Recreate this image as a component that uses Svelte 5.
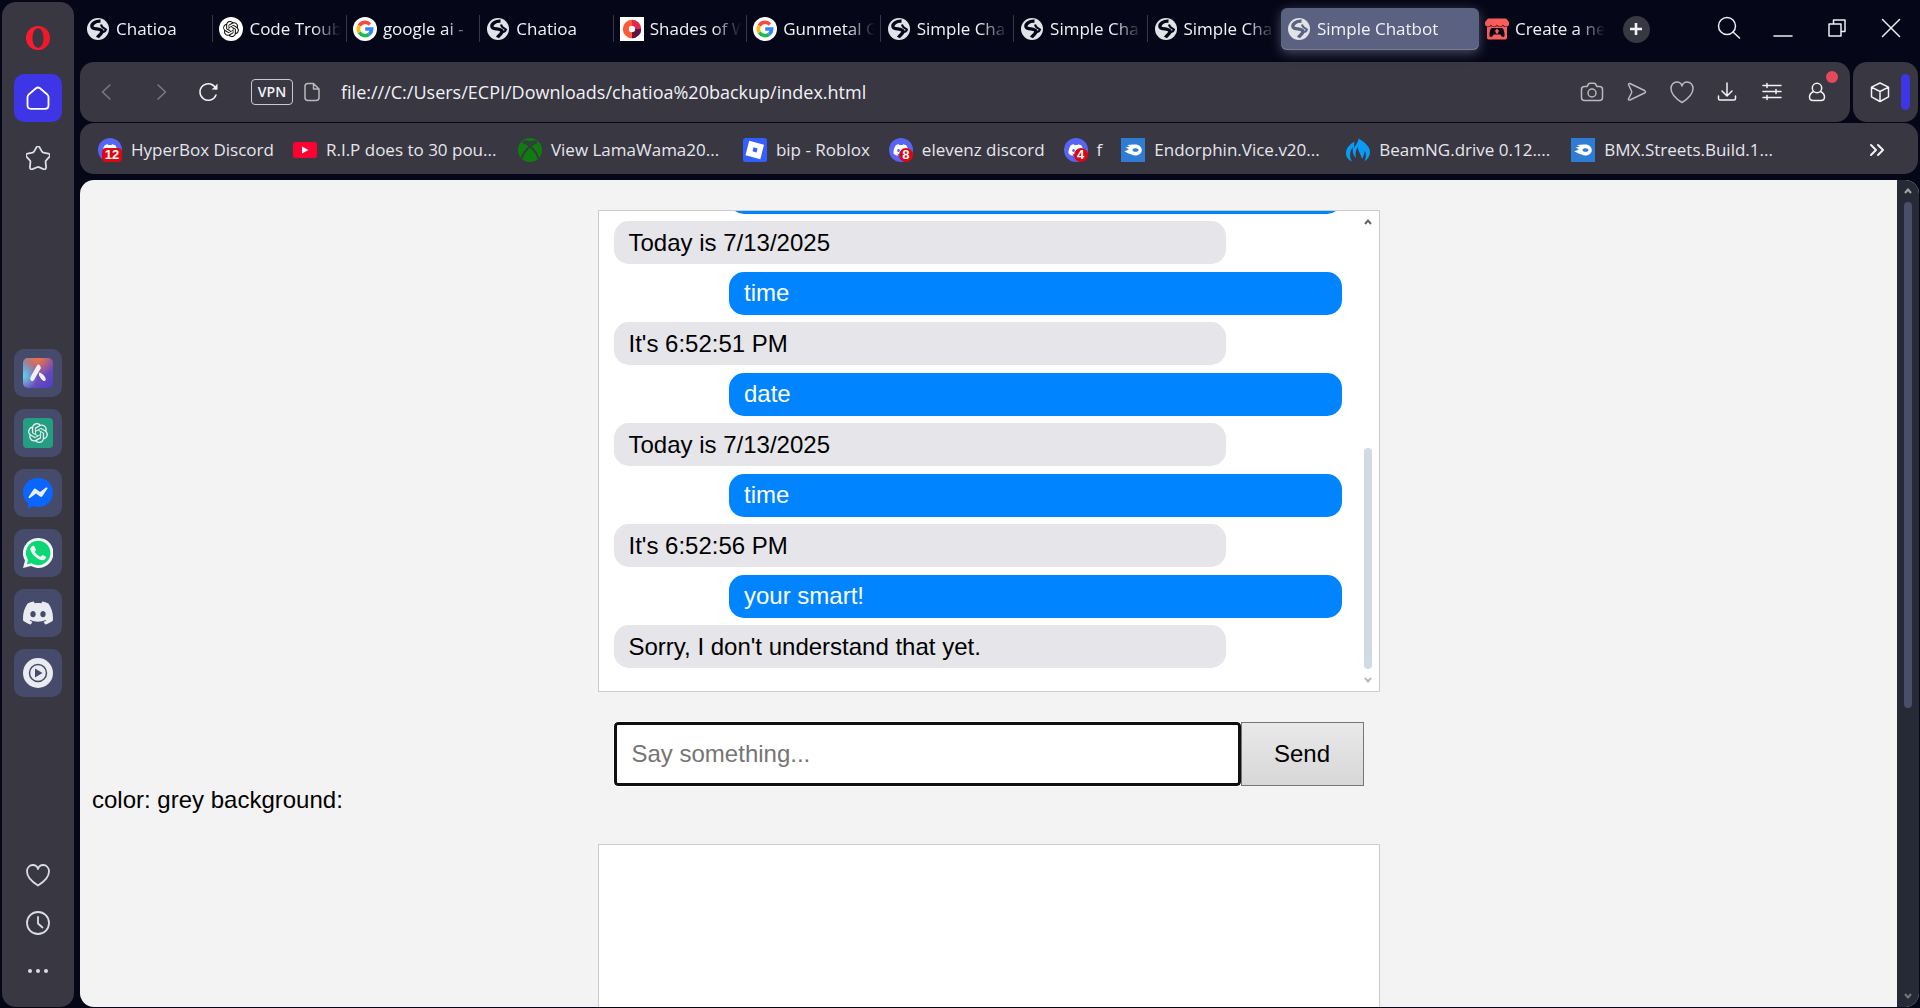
<script>
  const tabs = [
    { title: 'Chatioa', icon: 'globe' },
    { title: 'Code Troub', icon: 'openai' },
    { title: 'google ai -', icon: 'google' },
    { title: 'Chatioa', icon: 'globe' },
    { title: 'Shades of W', icon: 'shades' },
    { title: 'Gunmetal G', icon: 'google' },
    { title: 'Simple Cha', icon: 'globe' },
    { title: 'Simple Cha', icon: 'globe' },
    { title: 'Simple Cha', icon: 'globe' },
    { title: 'Simple Chatbot', icon: 'globe', active: true },
    { title: 'Create a ne', icon: 'itch', last: true }
  ];

  const bookmarks = [
    { title: 'HyperBox Discord', icon: 'discord', badge: '12' },
    { title: 'R.I.P does to 30 pou...', icon: 'youtube', long: true },
    { title: 'View LamaWama20...', icon: 'xbox', long: true },
    { title: 'bip - Roblox', icon: 'roblox' },
    { title: 'elevenz discord', icon: 'discord', badge: '8' },
    { title: 'f', icon: 'discord', badge: '4' },
    { title: 'Endorphin.Vice.v20...', icon: 'mediafire', long: true },
    { title: 'BeamNG.drive 0.12....', icon: 'beam', long: true },
    { title: 'BMX.Streets.Build.1...', icon: 'mediafire', long: true }
  ];

  const apps = [
    { name: 'Aria', icon: 'aria' },
    { name: 'ChatGPT', icon: 'chatgpt' },
    { name: 'Messenger', icon: 'messenger' },
    { name: 'WhatsApp', icon: 'whatsapp' },
    { name: 'Discord', icon: 'discordMark' },
    { name: 'Player', icon: 'player' }
  ];

  const tools = [
    { name: 'Snapshot', icon: 'camera', dim: true },
    { name: 'Send to My Flow', icon: 'send', dim: true },
    { name: 'Add to bookmarks', icon: 'heart', dim: true },
    { name: 'Downloads', icon: 'download' },
    { name: 'Easy setup', icon: 'sliders' },
    { name: 'Profile', icon: 'profile' }
  ];

  let messages = $state([
    { from: 'user', text: 'date' },
    { from: 'bot', text: 'Today is 7/13/2025' },
    { from: 'user', text: 'time' },
    { from: 'bot', text: "It's 6:52:51 PM" },
    { from: 'user', text: 'date' },
    { from: 'bot', text: 'Today is 7/13/2025' },
    { from: 'user', text: 'time' },
    { from: 'bot', text: "It's 6:52:56 PM" },
    { from: 'user', text: 'your smart!' },
    { from: 'bot', text: "Sorry, I don't understand that yet." }
  ]);
  let draft = $state('');
  let url = $state('file:///C:/Users/ECPI/Downloads/chatioa%20backup/index.html');

  function reply(text) {
    const said = text.toLowerCase();
    if (said.includes('time')) return "It's " + new Date().toLocaleTimeString();
    if (said.includes('date')) return 'Today is ' + new Date().toLocaleDateString();
    return "Sorry, I don't understand that yet.";
  }

  function send(event) {
    event.preventDefault();
    const text = draft.trim();
    if (!text) return;
    messages.push({ from: 'user', text }, { from: 'bot', text: reply(text) });
    draft = '';
  }

  const openaiPath =
    'M22.2819 9.8211a5.9847 5.9847 0 0 0-.5157-4.9108 6.0462 6.0462 0 0 0-6.5098-2.9A6.0651 6.0651 0 0 0 4.9807 4.1818a5.9847 5.9847 0 0 0-3.9977 2.9 6.0462 6.0462 0 0 0 .7427 7.0966 5.98 5.98 0 0 0 .511 4.9107 6.051 6.051 0 0 0 6.5146 2.9001A5.9847 5.9847 0 0 0 13.2599 24a6.0557 6.0557 0 0 0 5.7718-4.2058 5.9894 5.9894 0 0 0 3.9977-2.9001 6.0557 6.0557 0 0 0-.7475-7.0729zm-9.022 12.6081a4.4755 4.4755 0 0 1-2.8764-1.0408l.1419-.0804 4.7783-2.7582a.7948.7948 0 0 0 .3927-.6813v-6.7369l2.02 1.1686a.071.071 0 0 1 .038.052v5.5826a4.504 4.504 0 0 1-4.4945 4.4944zm-9.6607-4.1254a4.4708 4.4708 0 0 1-.5346-3.0137l.142.0852 4.783 2.7582a.7712.7712 0 0 0 .7806 0l5.8428-3.3685v2.3324a.0804.0804 0 0 1-.0332.0615L9.74 19.9502a4.4992 4.4992 0 0 1-6.1408-1.6464zM2.3408 7.8956a4.485 4.485 0 0 1 2.3655-1.9728V11.6a.7664.7664 0 0 0 .3879.6765l5.8144 3.3543-2.0201 1.1685a.0757.0757 0 0 1-.071 0l-4.8303-2.7865A4.504 4.504 0 0 1 2.3408 7.872zm16.5963 3.8558L13.1038 8.364 15.1192 7.2a.0757.0757 0 0 1 .071 0l4.8303 2.7913a4.4944 4.4944 0 0 1-.6765 8.1042v-5.6772a.79.79 0 0 0-.407-.667zm2.0107-3.0231l-.142-.0852-4.7735-2.7818a.7759.7759 0 0 0-.7854 0L9.409 9.2297V6.8974a.0662.0662 0 0 1 .0284-.0615l4.8303-2.7866a4.4992 4.4992 0 0 1 6.6802 4.66zM8.3065 12.863l-2.02-1.1638a.0804.0804 0 0 1-.038-.0567V6.0742a4.4992 4.4992 0 0 1 7.3757-3.4537l-.142.0805L8.704 5.459a.7948.7948 0 0 0-.3927.6813zm1.0976-2.3654l2.602-1.4998 2.6069 1.4998v2.9994l-2.5974 1.4997-2.6067-1.4997Z';
  const discordPath =
    'M20.317 4.3698a19.7913 19.7913 0 00-4.8851-1.5152.0741.0741 0 00-.0785.0371c-.211.3753-.4447.8648-.6083 1.2495-1.8447-.2762-3.68-.2762-5.4868 0-.1636-.3933-.4058-.8742-.6177-1.2495a.077.077 0 00-.0785-.037 19.7363 19.7363 0 00-4.8852 1.515.0699.0699 0 00-.0321.0277C.5334 9.0458-.319 13.5799.0992 18.0578a.0824.0824 0 00.0312.0561c2.0528 1.5076 4.0413 2.4228 5.9929 3.0294a.0777.0777 0 00.0842-.0276c.4616-.6304.8731-1.2952 1.226-1.9942a.076.076 0 00-.0416-.1057c-.6528-.2476-1.2743-.5495-1.8722-.8923a.077.077 0 01-.0076-.1277c.1258-.0943.2517-.1923.3718-.2914a.0743.0743 0 01.0776-.0105c3.9278 1.7933 8.18 1.7933 12.0614 0a.0739.0739 0 01.0785.0095c.1202.099.246.1981.3728.2924a.077.077 0 01-.0066.1276 12.2986 12.2986 0 01-1.873.8914.0766.0766 0 00-.0407.1067c.3604.698.7719 1.3628 1.225 1.9932a.076.076 0 00.0842.0286c1.961-.6067 3.9495-1.5219 6.0023-3.0294a.077.077 0 00.0313-.0552c.5004-5.177-.8382-9.6739-3.5485-13.6604a.061.061 0 00-.0312-.0286zM8.02 15.3312c-1.1825 0-2.1569-1.0857-2.1569-2.419 0-1.3332.9555-2.4189 2.157-2.4189 1.2108 0 2.1757 1.0952 2.1568 2.419 0 1.3332-.9555 2.4189-2.1569 2.4189zm7.9748 0c-1.1825 0-2.1569-1.0857-2.1569-2.419 0-1.3332.9554-2.4189 2.1569-2.4189 1.2108 0 2.1757 1.0952 2.1568 2.419 0 1.3332-.946 2.4189-2.1568 2.4189Z';
</script>

{#snippet favicon(name)}
  <svg class="favicon" viewBox="0 0 24 24" aria-hidden="true">
    {#if name === 'globe'}
      <circle cx="12" cy="12" r="11" fill="#e1e3e8" />
      <path class="cutLine" d="M14.500 4.200C9.500 3.800 4.800 7.200 6.200 10.200C7.600 12.800 14.800 11 15.800 14C16.600 16.800 13 17.500 11.500 20.500" />
      <path class="cutLine thin" d="M15 7.500C15.500 10.500 18.500 11.500 20 12.500C19.500 14 18 15 16.500 15" />
    {:else if name === 'openai'}
      <circle cx="12" cy="12" r="12" fill="#fff" />
      <g transform="translate(4 4) scale(.6667)"><path fill="#111" d={openaiPath} /></g>
    {:else if name === 'google'}
      <circle cx="12" cy="12" r="12" fill="#fff" />
      <g fill="none" stroke-width="3.600">
        <path stroke="#fb4a3c" d="M6.300 8.600A6.700 6.700 0 0 1 16.900 7.400" />
        <path stroke="#fbbc04" d="M6.300 15.400A6.700 6.700 0 0 1 6.300 8.600" />
        <path stroke="#25b84c" d="M16.300 17.100A6.700 6.700 0 0 1 6.300 15.400" />
        <path stroke="#3186ff" d="M12.200 12H18.700A6.700 6.700 0 0 1 16.300 17.100" />
      </g>
    {:else if name === 'shades'}
      <rect width="24" height="24" fill="#fff" />
      <circle cx="12" cy="12" r="6.200" fill="none" stroke="#ff5a36" stroke-width="6" />
      <path d="M12 5.800a6.200 6.200 0 0 1 6.200 6.200" fill="none" stroke="#e02a4e" stroke-width="6" />
      <path d="M18.200 12A6.200 6.200 0 0 1 12 18.200" fill="none" stroke="#5c1546" stroke-width="6" />
    {:else if name === 'itch'}
      <path fill="#fa5c5c" d="M3 1.500h18L24 5v2.200C24 8.600 22.700 9.500 21.300 9.500c-1.600 0-2.700-.8-3.300-1.800-.6 1-1.500 1.800-3 1.800-1.400 0-2.400-.8-3-1.800-.6 1-1.600 1.800-3 1.800-1.500 0-2.400-.8-3-1.800-.6 1-1.700 1.800-3.300 1.800C1.300 9.500 0 8.600 0 7.200V5z" />
      <path fill="#fa5c5c" d="M2 10c1.600.2 3-.1 4-1 1.800 1.400 4.200 1.400 6 0 1.800 1.400 4.200 1.400 6 0 1 .9 2.400 1.200 4 1v10.500c0 1.600-.6 2-2.500 2h-15c-1.900 0-2.500-.4-2.500-2z" />
      <path class="cut" d="M7.500 11h9c1.700 0 2.200 1.500 2.800 4.400.5 2.500.4 4.600-1.200 4.600-1.300 0-2-1.500-2.900-2.500H8.800c-.9 1-1.600 2.500-2.900 2.500-1.600 0-1.700-2.100-1.200-4.600C5.300 12.500 5.800 11 7.500 11z" />
      <path fill="#fa5c5c" d="M12 11.500l2.600 3h-1.400v2h-2.400v-2H9.400z" />
    {:else if name === 'discord'}
      <circle cx="12" cy="12" r="12" fill="#5865f2" />
      <g transform="translate(4.500 4.500) scale(.625)"><path fill="#fff" d={discordPath} /></g>
    {:else if name === 'youtube'}
      <rect y="4" width="24" height="16" rx="2.500" fill="#ff0033" />
      <path fill="#fff" d="M9 8.500l6.500 3.500L9 15.500z" />
    {:else if name === 'xbox'}
      <circle cx="12" cy="12" r="12" fill="#107c10" />
      <path class="panelCut" d="M4 3.600C7 3 10 5 12 6.600 14 5 17 3 20 3.600 17 1.800 14.500 2.600 12 4 9.500 2.600 7 1.800 4 3.600z" />
      <path class="panelLine" d="M5 3.800C12 7 18 13 20.500 20.500M19 3.800C12 7 6 13 3.500 20.500" />
    {:else if name === 'roblox'}
      <rect width="24" height="24" rx="2.500" fill="#335fff" />
      <path fill="#fff" fill-rule="evenodd" d="M6.200 2.800L21 6.800 17.300 21.200 2.500 17.300zM10.600 9.300l-1.100 4 4 1.100 1.100-4z" />
    {:else if name === 'mediafire'}
      <rect width="24" height="24" fill="#2e7cd3" />
      <path fill="#fff" d="M6 7.200C9 6.300 12 6.500 14.500 6.500 18 6.500 20.800 9 20.800 12S18 17.500 14.500 17.500C11.500 17.500 9.500 16 7 15.300L3.300 13.200C5 12.800 6.500 12.200 8 11.200L4.500 9.500C6.500 9.500 7.500 9 9 8.600Z" />
      <ellipse cx="14.500" cy="12" rx="3" ry="1.800" fill="#2e7cd3" />
    {:else if name === 'beam'}
      <path fill="#0a9cf5" d="M12.500.5c5 3 11.500 7.500 11.500 13.500 0 4-2 7-5.500 9.500 1.500-3.500 2-7 .3-11-.4 3.500-1.300 6.500-2.800 8.500-1-5-4-7.500-4.200-12C9.600 12 9.300 15 9.800 20 7 16.500 6.300 14 7 9c-3 3.500-4.300 9-1 14.500C1.500 21.500 0 18.500 0 15 0 9.500 4.500 6 8.500 3.500 8 5.500 8 8 8.500 10 9.500 6.500 12.500 4 12.500.5z" />
    {/if}
  </svg>
{/snippet}

{#snippet line(name)}
  <svg class="line" viewBox="0 0 24 24" aria-hidden="true">
    {#if name === 'home'}
      <path d="M12 1.500Q13 1.500 14 2.300L21 8.200Q22.500 9.500 22.500 11V19.500Q22.500 22.800 19.200 22.800H4.800Q1.500 22.800 1.500 19.500V11Q1.500 9.500 3 8.200L10 2.300Q11 1.500 12 1.500Z" />
    {:else if name === 'star'}
      <path d="M10.500 1.300Q12 -1 13.500 1.300L16 5.600Q16.500 6.400 17.400 6.600L22.400 7.700Q25 8.600 23.300 10.800L20 14.600Q19.500 15.300 19.600 16.200L20.100 21.300Q20 24 17.500 23.200L12.900 21.200Q12 20.800 11.100 21.200L6.500 23.200Q4 24 3.900 21.300L4.400 16.200Q4.500 15.300 4 14.600L.7 10.800Q-1 8.600 1.600 7.700L6.600 6.600Q7.500 6.400 8 5.600Z" />
    {:else if name === 'heart'}
      <path d="M12 22.500C8 20 1 14.500 1 8.500 1 4.500 3.800 2 6.800 2 9.500 2 11.300 3.400 12 6 12.700 3.400 14.500 2 17.200 2 20.200 2 23 4.500 23 8.500 23 14.500 16 20 12 22.500Z" />
    {:else if name === 'clock'}
      <circle cx="12" cy="12" r="11" /><path d="M12 6v6.500l4.500 4" />
    {:else if name === 'dots'}
      <g class="solid"><circle cx="4" cy="12" r="2" /><circle cx="12" cy="12" r="2" /><circle cx="20" cy="12" r="2" /></g>
    {:else if name === 'back'}
      <path d="M16 5L8.500 12L16 19" />
    {:else if name === 'forward'}
      <path d="M8 5L15.500 12L8 19" />
    {:else if name === 'reload'}
      <path d="M20 9A8.300 8.300 0 1 0 20 15" /><path class="solid" d="M21.500 3.500V9.500H15.500L18 7.500Z" />
    {:else if name === 'page'}
      <path d="M8 3.500H13.500L19 9V17.500Q19 20.500 16 20.500H8Q5 20.500 5 17.500V6.500Q5 3.500 8 3.500ZM13.500 3.500V9H19" />
    {:else if name === 'camera'}
      <path d="M4.500 6.500H7L8.500 4Q9 3.200 10 3.200H14Q15 3.200 15.500 4L17 6.500H19.500Q22.500 6.500 22.500 9.500V17.500Q22.500 20.500 19.500 20.500H4.500Q1.500 20.500 1.500 17.500V9.500Q1.500 6.500 4.500 6.500Z" /><circle cx="12" cy="13" r="4" />
    {:else if name === 'send'}
      <path d="M3.500 4.500Q3.500 3 5 3.500L19.500 10.500Q21.500 12 19.500 13L5 20Q3 20.500 3.500 18.800L6.500 13Q7 12 6.500 11Z" />
    {:else if name === 'download'}
      <path d="M12 3V15.500M7 11L12 16L17 11M3.500 16V18.500Q3.500 20 5 20H19Q20.500 20 20.500 18.500V16" />
    {:else if name === 'sliders'}
      <path d="M3 5.500H21M3 11.500H21M3 17.500H21M7 3.500V7.500M16 9.500V13.500M7 15.500V19.500" />
    {:else if name === 'profile'}
      <circle cx="12" cy="8" r="4.700" /><path d="M8.500 11.500Q4.500 13.500 4.500 17Q4.500 20.500 8 20.500H16Q19.500 20.500 19.500 17Q19.500 13.500 15.500 11.500" />
    {:else if name === 'cube'}
      <path d="M12 3L20.500 7.200V16.800L12 21.500L3.500 16.800V7.200ZM3.500 7.200L12 11.500L20.500 7.200M12 11.500V21.500" />
    {:else if name === 'search'}
      <circle cx="10" cy="10" r="8.500" /><path d="M16 16L22.500 22" />
    {:else if name === 'minimise'}
      <path d="M3 20H21" />
    {:else if name === 'restore'}
      <path d="M4 8H16V20H4ZM8.500 8V4H20V15.500H16" />
    {:else if name === 'close'}
      <path d="M3.500 3.500L20.500 20.500M20.500 3.500L3.500 20.500" />
    {:else if name === 'more'}
      <path d="M6 7L11 12L6 17M13 7L18 12L13 17" />
    {:else if name === 'plus'}
      <path d="M12 6V18M6 12H18" />
    {/if}
  </svg>
{/snippet}

{#snippet appIcon(name)}
  <svg class="app-icon" viewBox="0 0 30 30" aria-hidden="true">
    {#if name === 'aria'}
      <defs>
        <linearGradient id="aria-base" x1="0" y1="0" x2="1" y2="1">
          <stop offset="0" stop-color="#8a8fb0" /><stop offset=".5" stop-color="#7550b8" /><stop offset="1" stop-color="#4a3fc4" />
        </linearGradient>
        <radialGradient id="aria-warm" cx=".5" cy="0" r=".6"><stop offset="0" stop-color="#f4703f" /><stop offset="1" stop-color="#f4703f" stop-opacity="0" /></radialGradient>
        <radialGradient id="aria-cool" cx="0" cy=".6" r=".5"><stop offset="0" stop-color="#63d4ea" /><stop offset="1" stop-color="#63d4ea" stop-opacity="0" /></radialGradient>
      </defs>
      <rect width="30" height="30" rx="5" fill="url(#aria-base)" />
      <rect width="30" height="30" rx="5" fill="url(#aria-warm)" />
      <rect width="30" height="30" rx="5" fill="url(#aria-cool)" />
      <path fill="#f0f0f6" d="M14 7.500Q15.500 5.500 17 7.500L18 10L11 22Q9.500 24 8 22.500Q6.500 21 7.500 19ZM16 14.500Q20 15 22.500 20Q23.500 23.500 20.500 23Q18 21.500 16 17.500Z" />
    {:else if name === 'chatgpt'}
      <rect width="30" height="30" rx="4" fill="#249e80" />
      <g transform="translate(5 5) scale(.8333)"><path fill="#eceef2" d={openaiPath} /></g>
    {:else if name === 'messenger'}
      <path fill="#0a66ff" d="M15 0C23.500 0 30 6 30 14.500S23.500 29 15 29Q12 29 9.500 28L6 30Q5 30 5 29V25.500Q0 21.500 0 14.500C0 6 6.500 0 15 0Z" />
      <path fill="#eceef2" d="M5.500 19L10.500 11.500Q11.500 10 13 11L17 14L23 9.500Q25 9 24.500 10.500L19.500 18Q18.500 19.500 17 18.500L13 15.500L7 20Q5.500 20.500 5.500 19Z" />
    {:else if name === 'whatsapp'}
      <path fill="#f2f4f6" d="M15 0A15 15 0 1 1 8 28L0 30L2 22.500A15 15 0 0 1 15 0Z" />
      <path fill="#0bd874" d="M15 2.800A12.200 12.200 0 1 1 8.500 25.200L4 26.300L5 21.800A12.200 12.200 0 0 1 15 2.800Z" />
      <path fill="#f2f4f6" d="M8.500 8.500Q9.500 7.300 11 7.800L13 11.500Q13 12.500 11.800 14Q14 17.500 17.500 18.800L19.500 17L23 18.800Q23 21.500 20 22.300Q17 22.500 12.500 19Q7.500 14.500 7.300 11Q7.500 9.500 8.500 8.500Z" />
    {:else if name === 'discordMark'}
      <g transform="scale(1.25)"><path fill="#e9ebf1" d={discordPath} /></g>
    {:else if name === 'player'}
      <circle cx="15" cy="15" r="15" fill="#e9ebf1" />
      <circle cx="15" cy="15" r="8.500" fill="none" stroke="#474b6b" stroke-width="1.500" />
      <path fill="#474b6b" d="M12 10.500L19.500 15L12 19.500Z" />
    {/if}
  </svg>
{/snippet}

{#snippet arrow(down)}
  <svg class="arrow" viewBox="0 0 8 6" aria-hidden="true">
    <path d={down ? 'M1 1L4 4.500L7 1' : 'M1 5L4 1.500L7 5'} />
  </svg>
{/snippet}

<div class="browser">
  <aside class="sidebar">
    <button class="side-btn" aria-label="Opera menu">
      <svg class="opera" viewBox="0 0 24 24" aria-hidden="true">
        <path fill="#ff1b2d" fill-rule="evenodd" d="M12 0A12 12 0 1 1 12 24A12 12 0 1 1 12 0ZM12 2.200C8.500 2.200 6.500 7 6.500 12S8.500 21.800 12 21.800S17.500 17 17.500 12S15.500 2.200 12 2.200Z" />
        <path fill="#a70014" d="M12.500 2.200Q16 .8 19 3Q24 7 24 12T19 21Q16 23.200 12.500 21.800C16 21 17.500 17 17.500 12S16 3 12.500 2.200Z" opacity=".15" />
      </svg>
    </button>
    <button class="side-btn home" aria-label="Speed dial">{@render line('home')}</button>
    <button class="side-btn" aria-label="Bookmarks">{@render line('star')}</button>
    <div class="apps">
      {#each apps as app}
        <button class="app" aria-label={app.name}>{@render appIcon(app.icon)}</button>
      {/each}
    </div>
    <div class="side-foot">
      <button class="side-btn" aria-label="Favourites">{@render line('heart')}</button>
      <button class="side-btn" aria-label="History">{@render line('clock')}</button>
      <button class="side-btn" aria-label="More">{@render line('dots')}</button>
    </div>
  </aside>

  <div class="main">
    <header class="tabbar">
      <nav class="tabs" aria-label="Tabs">
        {#each tabs as tab}
          <button class="tab" class:active={tab.active} class:last={tab.last}>
            {@render favicon(tab.icon)}
            <span class="tab-title">{tab.title}</span>
          </button>
        {/each}
        <button class="new-tab" aria-label="New tab">{@render line('plus')}</button>
      </nav>
      <div class="window-controls">
        <button aria-label="Search tabs">{@render line('search')}</button>
        <button aria-label="Minimise">{@render line('minimise')}</button>
        <button aria-label="Restore">{@render line('restore')}</button>
        <button aria-label="Close">{@render line('close')}</button>
      </div>
    </header>

    <div class="toolbar-row">
      <div class="panel toolbar">
        <div class="nav">
          <button class="faint" aria-label="Back">{@render line('back')}</button>
          <button class="faint" aria-label="Forward">{@render line('forward')}</button>
        </div>
        <button class="reload" aria-label="Reload">{@render line('reload')}</button>
        <button class="vpn">VPN</button>
        <span class="page-icon">{@render line('page')}</span>
        <input class="url" type="text" aria-label="Address" spellcheck="false" bind:value={url} />
        <div class="tools">
          {#each tools as tool}
            <button class="tool" class:soft={tool.dim} aria-label={tool.name}>
              {@render line(tool.icon)}
              {#if tool.icon === 'profile'}<span class="alert"></span>{/if}
            </button>
          {/each}
        </div>
      </div>
      <div class="panel extensions">
        <button class="tool" aria-label="Extensions">{@render line('cube')}</button>
        <span class="handle"></span>
      </div>
    </div>

    <nav class="panel bookmarks" aria-label="Bookmarks bar">
      {#each bookmarks as item}
        <a href="#bookmark" class="bookmark" class:long={item.long}>
          <span class="mark">
            {@render favicon(item.icon)}
            {#if item.badge}<span class="badge" class:wide={item.badge.length > 1}>{item.badge}</span>{/if}
          </span>
          <span class="bookmark-title">{item.title}</span>
        </a>
      {/each}
      <button class="overflow" aria-label="More bookmarks">{@render line('more')}</button>
    </nav>

    <div class="viewport">
      <main class="page">
        <section class="chat">
          <div class="log">
            {#each messages as message}
              <div class="bubble {message.from}">{message.text}</div>
            {/each}
          </div>
          <div class="chat-scroll">
            {@render arrow(false)}
            <div class="chat-track"><div class="chat-thumb"></div></div>
            {@render arrow(true)}
          </div>
        </section>
        <form class="composer" onsubmit={send}>
          <input type="text" placeholder="Say something..." aria-label="Message" bind:value={draft} />
          <button type="submit">Send</button>
        </form>
        <p class="stray">color: grey background:</p>
        <section class="chat"></section>
      </main>
      <div class="page-scroll">
        {@render arrow(false)}
        <div class="page-track"><div class="page-thumb"></div></div>
        {@render arrow(true)}
      </div>
    </div>
  </div>
</div>

<style>
  :global(body) {
    margin: 0;
    background: #050617;
  }

  .browser {
    --ink: #050617;
    --panel: #383742;
    display: flex;
    gap: 6px;
    box-sizing: border-box;
    height: 100vh;
    padding: 2px 1px 1px 2px;
    overflow: hidden;
    background: var(--ink);
    color: #f2f2f6;
    font-family: 'Open Sans', 'Noto Sans', sans-serif;
    font-size: 17px;
  }

  button {
    padding: 0;
    border: 0;
    background: none;
    color: inherit;
    font: inherit;
  }

  svg {
    display: block;
    flex: none;
  }

  .line {
    width: 24px;
    height: 24px;
    fill: none;
    stroke: currentColor;
    stroke-width: 1.500;
    stroke-linecap: round;
    stroke-linejoin: round;
  }

  .line .solid {
    fill: currentColor;
    stroke: none;
  }

  .favicon {
    width: 24px;
    height: 24px;
  }

  .cut {
    fill: var(--ink);
  }

  .cutLine {
    fill: none;
    stroke: var(--ink);
    stroke-width: 3.400;
  }

  .cutLine.thin {
    stroke-width: 2;
  }

  .panelCut {
    fill: var(--panel);
  }

  .panelLine {
    fill: none;
    stroke: var(--panel);
    stroke-width: 2;
  }

  .panel {
    background: var(--panel);
    border-radius: 14px;
  }

  /* Sidebar */
  .sidebar {
    display: flex;
    flex: none;
    flex-direction: column;
    align-items: center;
    gap: 12px;
    box-sizing: border-box;
    width: 72px;
    padding: 12px 0;
    border-radius: 14px;
    background: var(--panel);
    color: #d9dee6;
  }

  .side-btn {
    display: grid;
    place-items: center;
    width: 48px;
    height: 48px;
  }

  .side-btn .line {
    stroke-width: 1.800;
  }

  .opera {
    width: 24px;
    height: 24px;
  }

  .home {
    border-radius: 10px;
    background: #3d35e6;
    color: #fff;
  }

  .apps {
    display: flex;
    flex-direction: column;
    gap: 12px;
    margin-top: 155px;
  }

  .app {
    display: grid;
    place-items: center;
    width: 48px;
    height: 48px;
    border-radius: 10px;
    background: #474b6b;
  }

  .app-icon {
    width: 30px;
    height: 30px;
  }

  .side-foot {
    display: flex;
    flex-direction: column;
    margin-top: auto;
  }

  /* Tabs */
  .main {
    display: flex;
    flex: 1;
    flex-direction: column;
    min-width: 0;
  }

  .tabbar {
    display: flex;
    align-items: flex-start;
    justify-content: space-between;
    height: 60px;
  }

  .tabs {
    display: flex;
    flex: 1;
    align-items: center;
    min-width: 0;
    padding-top: 6px;
  }

  .tab {
    position: relative;
    display: flex;
    flex: 1;
    align-items: center;
    gap: 6px;
    min-width: 0;
    height: 42px;
    padding: 0 6px;
    text-align: left;
  }

  .tab:not(.active, .last, :nth-child(9))::after {
    content: '';
    position: absolute;
    top: 7px;
    right: 0;
    width: 1px;
    height: 27px;
    background: #383845;
  }

  .tab-title {
    flex: 1;
    overflow: hidden;
    padding-bottom: 2px;
    white-space: nowrap;
    mask-image: linear-gradient(to right, #000 calc(100% - 28px), transparent);
  }

  .tab.active {
    --ink: #5b6180;
    z-index: 1;
    flex: none;
    width: 198px;
    border-radius: 6px;
    background: #5b6180;
    box-shadow: 0 3px 12px #4a4d63, inset 0 -1px #797e98;
  }

  .tab.last {
    flex: none;
    width: 132px;
  }

  .new-tab {
    display: grid;
    flex: none;
    place-items: center;
    width: 27px;
    height: 27px;
    margin-left: 12px;
    border-radius: 50%;
    background: #383842;
  }

  .new-tab .line {
    stroke-width: 2.600;
    stroke-linecap: butt;
  }

  .window-controls {
    display: flex;
    flex: none;
    gap: 30px;
    padding: 14px 16px 0 67px;
    color: #eceef3;
  }

  /* Toolbar */
  .toolbar-row {
    display: flex;
    gap: 3px;
    margin-bottom: 1px;
    padding-right: 1px;
  }

  .toolbar {
    display: flex;
    flex: 1;
    align-items: center;
    min-width: 0;
    height: 60px;
    box-sizing: border-box;
    padding: 0 21px 0 14px;
  }

  .nav {
    display: flex;
    gap: 32px;
    margin-right: 22px;
  }

  .faint {
    color: #7b7b86;
  }

  .reload {
    margin-right: 31px;
  }

  .vpn {
    width: 42px;
    height: 26px;
    box-sizing: border-box;
    border: 1px solid #c9c9d0;
    border-radius: 4px;
    font-size: 14px;
    font-weight: 600;
    line-height: 24px;
  }

  .page-icon {
    margin: 0 17px 0 7px;
    color: #b8b8c0;
  }

  .url {
    flex: 1;
    min-width: 0;
    padding: 0;
    border: 0;
    outline: 0;
    background: none;
    color: #f2f2f6;
    font: inherit;
    font-size: 18px;
  }

  .tools {
    display: flex;
    gap: 21px;
  }

  .tool {
    position: relative;
  }

  .soft {
    color: #b9b9c1;
  }

  .alert {
    position: absolute;
    top: -9px;
    right: -9px;
    width: 12px;
    height: 12px;
    border-radius: 50%;
    background: #e5495d;
  }

  .extensions {
    display: flex;
    flex: none;
    align-items: center;
    gap: 9px;
    padding: 0 8px 0 15px;
  }

  .handle {
    width: 9px;
    height: 36px;
    border-radius: 5px;
    background: #3d35e6;
  }

  /* Bookmarks */
  .bookmarks {
    display: flex;
    align-items: center;
    gap: 19px;
    height: 51px;
    margin: 0 1px 6px 0;
    box-sizing: border-box;
    padding: 3px 29px 0 18px;
  }

  .bookmark {
    display: flex;
    flex: none;
    align-items: center;
    gap: 9px;
    color: #e6e6ec;
    text-decoration: none;
    white-space: nowrap;
  }

  .bookmark.long {
    width: 206px;
  }

  .bookmark-title {
    padding-bottom: 2px;
  }

  .mark {
    position: relative;
  }

  .badge {
    position: absolute;
    right: 0;
    bottom: 0;
    width: 14px;
    height: 14px;
    border-radius: 7px;
    background: #e00610;
    color: #fff;
    font: bold 13px/14px 'Liberation Sans', sans-serif;
    text-align: center;
  }

  .badge.wide {
    width: 20px;
    border-radius: 4px;
  }

  .overflow {
    margin-left: auto;
  }

  .overflow .line {
    stroke-width: 2;
  }

  /* Web page */
  .viewport {
    display: flex;
    flex: 1;
    min-height: 0;
    overflow: hidden;
    border-radius: 14px;
    background: #f3f3f3;
  }

  .page {
    flex: 1;
    min-width: 0;
    overflow: hidden;
    color: #000;
    font: 24px/28px 'Liberation Sans', Arial, sans-serif;
  }

  .chat {
    display: flex;
    box-sizing: border-box;
    width: 782px;
    max-width: 100%;
    height: 482px;
    margin: 30px auto;
    border: 1px solid #ccc;
    background: #fff;
  }

  .log {
    display: flex;
    flex: 1;
    flex-direction: column;
    justify-content: flex-end;
    overflow: hidden;
    padding: 0 15px 23px;
  }

  .bubble {
    flex: none;
    box-sizing: border-box;
    width: calc(84% + 1px);
    padding: 8px 15px 7px;
    border-radius: 15px;
  }

  .bubble.bot {
    background: #e5e5ea;
  }

  .bubble.bot:not(:last-child) {
    margin-bottom: 8px;
  }

  .bubble.user {
    align-self: flex-end;
    margin-bottom: 7px;
    padding: 7px 15px 8px;
    background: #0084ff;
    color: #fff;
  }

  .arrow {
    width: 8px;
    height: 6px;
    fill: none;
    stroke: currentColor;
    stroke-width: 2;
  }

  .chat-scroll {
    display: flex;
    flex: none;
    flex-direction: column;
    align-items: center;
    width: 22px;
    padding: 8px 0;
    color: #666;
  }

  .chat-scroll .arrow:last-child {
    color: #bbb;
  }

  .chat-track {
    display: flex;
    flex: 1;
    flex-direction: column;
    justify-content: flex-end;
    padding: 8px 0;
  }

  .chat-thumb {
    width: 8px;
    height: 221px;
    border-radius: 4px;
    background: #d1dbe3;
  }

  .composer {
    display: flex;
    width: 750px;
    max-width: 100%;
    height: 64px;
    margin: 0 auto;
  }

  .composer input {
    flex: 1;
    min-width: 0;
    padding: 0 15px;
    border: 3px solid #101010;
    border-radius: 4px;
    outline: 1px solid #fff;
    background: #fff;
    color: #000;
    font: inherit;
  }

  .composer input::placeholder {
    color: #757575;
    opacity: 1;
  }

  .composer button {
    flex: none;
    width: 123px;
    border: 1px solid #777;
    background: linear-gradient(#e9e9e9, #d7d7d7);
    color: #000;
  }

  .stray {
    margin: 0 12px;
  }

  .page-scroll {
    display: flex;
    flex: none;
    flex-direction: column;
    align-items: center;
    width: 22px;
    padding: 8px 0;
    box-sizing: border-box;
    background: #262a36;
    color: #a5a5a5;
  }

  .page-scroll .arrow:last-child {
    color: #777;
  }

  .page-track {
    flex: 1;
    padding: 8px 0;
  }

  .page-thumb {
    width: 8px;
    height: calc(65% - 3px);
    border-radius: 4px;
    background: #4b4e68;
  }
</style>
